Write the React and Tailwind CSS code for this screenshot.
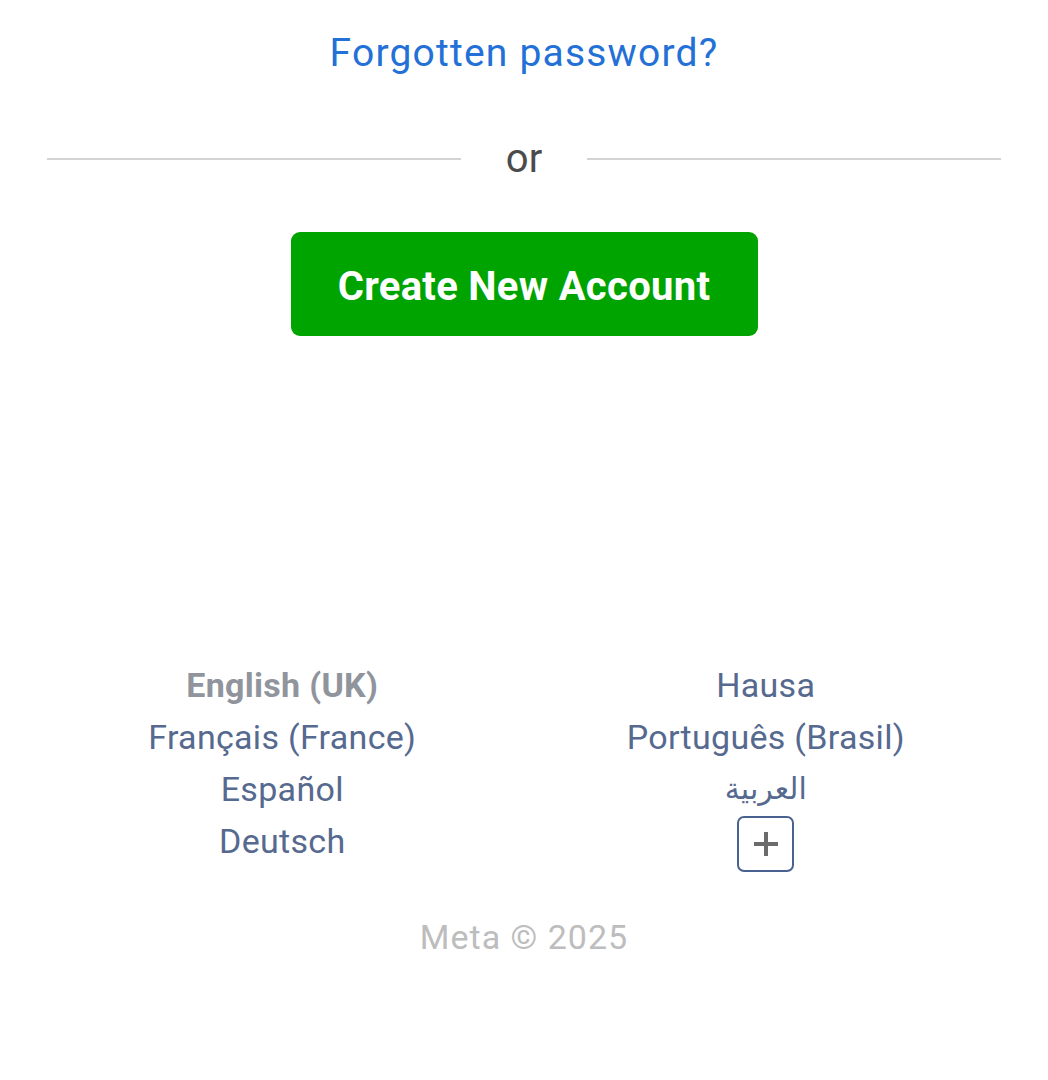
export default function App() {
  const left = ["Français (France)", "Español", "Deutsch"];
  return (
    <div
      className="min-h-screen bg-white flex flex-col items-center pt-[31px]"
      style={{ fontFamily: "Roboto, 'Noto Sans', Arial, sans-serif" }}
    >
      <a className="text-[39px] leading-[44px] tracking-[1.2px] text-[#2370d6]">Forgotten password?</a>

      <div className="w-full px-[47px] mt-[62px] flex items-center h-[44px]">
        <div className="flex-1 h-[2px] bg-[#d4d4d4]" />
        <span className="w-[126px] text-center text-[40px] leading-[44px] text-[#4b4b4b]">or</span>
        <div className="flex-1 h-[2px] bg-[#d4d4d4]" />
      </div>

      <button className="mt-[51px] w-[467px] h-[104px] pt-[5px] rounded-[9px] bg-[#00a400] text-white text-[40px] tracking-[0.3px] font-bold">
        Create New Account
      </button>

      <div className="w-full px-[47px] mt-[323px] grid grid-cols-2 gap-x-[13px] text-[34px] leading-[52px] tracking-[0.3px] text-[#56698f]">
        <div className="flex flex-col items-center">
          <span className="font-bold text-[#90949c]">English (UK)</span>
          {left.map((l) => (
            <span key={l}>{l}</span>
          ))}
        </div>
        <div className="flex flex-col items-center">
          <span>Hausa</span>
          <span>Português (Brasil)</span>
          <span
            className="text-[30px] tracking-normal"
            style={{ fontFamily: "'DejaVu Sans', 'Noto Sans', sans-serif" }}
            dir="rtl"
          >
            العربية
          </span>
          <div className="mt-px w-[57px] h-[56px] rounded-[7px] border-2 border-[#4a6290] flex items-center justify-center">
            <svg width="30" height="30" viewBox="0 0 30 30">
              <path d="M15 3v24M3 15h24" stroke="#6b6b6b" strokeWidth="4" />
            </svg>
          </div>
        </div>
      </div>

      <div className="mt-[43px] text-[34px] leading-[44px] tracking-[1px] text-[#bdbdbd]">Meta © 2025</div>
    </div>
  );
}
